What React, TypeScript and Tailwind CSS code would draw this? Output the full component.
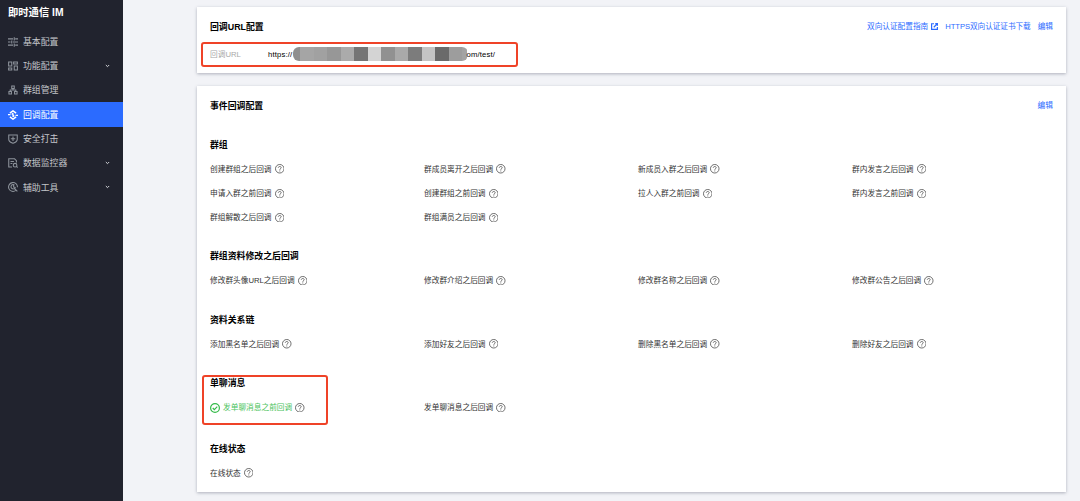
import React from "react";

type IconName = "sliders" | "grid" | "tree" | "callback" | "shield" | "monitor" | "tool";

const NavIcon = ({ name }: { name: IconName }) => {
  const shapes: Record<IconName, React.ReactNode> = {
    sliders: (
      <path d="M0 3h8M11.500 3H16M10 .5v5M0 8h4M8 8h8M6 5.500v5M0 13h8M11.500 13H16M10 10.500v5" />
    ),
    grid: (
      <path d="M1 1.500h5v6.500H1zM10 8h5v6.500h-5zM9 1.500h6v3.200H9zM1 11.300h5v3.200H1z" />
    ),
    tree: (
      <path d="M6 1.500h4v4H6zM1.500 10.500h4v4h-4zM10.500 10.500h4v4h-4zM8 5.500v2.600M3.500 10.500V8.100h9v2.400" />
    ),
    callback: (
      <>
        <path strokeWidth="2.300" d="M3 5 8 1.300 13 5M13 11l-5 3.700L3 11" />
        <path strokeWidth="2" d="M0 7.500h4M12 8.500h4M8 5v6M5.800 7 8 5M10.200 9 8 11" />
      </>
    ),
    shield: (
      <path d="M1.200 1.500h13.600v6.800c0 3-2.800 5.200-6.800 6.500-4-1.300-6.800-3.500-6.800-6.500zM8 4v7M4.500 7.500h7" />
    ),
    monitor: (
      <>
        <path d="M6.500 14.500H1.200V1.300h9.300l3 3V7M4 5.500h5.500M4 8.700h3" />
        <circle cx="11.300" cy="11.500" r="2.900" />
        <path d="m13.300 13.500 2.200 1.700" />
      </>
    ),
    tool: (
      <>
        <path d="M12.500 13.500A7.100 7.100 0 1 1 15.100 8.500" />
        <path d="M9.500 4.500a3.400 3.400 0 1 0 2 4L9 8V5.500zM10 10l5 5" />
      </>
    ),
  };
  return (
    <svg viewBox="0 0 16 16" className="size-[10px] shrink-0" fill="none" stroke="currentColor" strokeWidth="1.700">
      {shapes[name]}
    </svg>
  );
};

const NAV: { icon: IconName; label: string; more?: boolean; active?: boolean }[] = [
  { icon: "sliders", label: "基本配置" },
  { icon: "grid", label: "功能配置", more: true },
  { icon: "tree", label: "群组管理" },
  { icon: "callback", label: "回调配置", active: true },
  { icon: "shield", label: "安全打击" },
  { icon: "monitor", label: "数据监控器", more: true },
  { icon: "tool", label: "辅助工具", more: true },
];

const Help = () => (
  <svg viewBox="0 0 18 18" className="size-[9.500px] shrink-0 text-[#555]" fill="none" stroke="currentColor" strokeWidth="1.600">
    <circle cx="9" cy="9" r="8.100" />
    <path d="M6.300 7.200C6.300 3.900 11.700 3.900 11.700 7.100 11.700 8.900 9 8.800 9 11M9 12.300v1.800" />
  </svg>
);

const Check = () => (
  <svg viewBox="0 0 20 20" className="mr-[3px] size-[10px] shrink-0" fill="none" stroke="#35bb4a" strokeWidth="2.400">
    <circle cx="10" cy="10" r="8.800" />
    <path d="m5.500 10 3.200 3.200 5.800-5.800" />
  </svg>
);

const GROUPS: { title: string; items: string[]; className: string }[] = [
  {
    title: "群组",
    className: "h-[111.500px]",
    items: [
      "创建群组之后回调", "群成员离开之后回调", "新成员入群之后回调", "群内发言之后回调",
      "申请入群之前回调", "创建群组之前回调", "拉人入群之前回调", "群内发言之前回调",
      "群组解散之后回调", "群组满员之后回调",
    ],
  },
  {
    title: "群组资料修改之后回调",
    className: "h-[63.500px]",
    items: ["修改群头像URL之后回调", "修改群介绍之后回调", "修改群名称之后回调", "修改群公告之后回调"],
  },
  {
    title: "资料关系链",
    className: "h-[63.500px]",
    items: ["添加黑名单之后回调", "添加好友之后回调", "删除黑名单之后回调", "删除好友之后回调"],
  },
  { title: "单聊消息", className: "h-[65.500px]", items: ["发单聊消息之前回调", "发单聊消息之后回调"] },
  { title: "在线状态", className: "h-[50px]", items: ["在线状态"] },
];

const ENABLED = "发单聊消息之前回调";

const MOSAIC = [
  "w-[7px] bg-[#8f8f8f]", "w-[13.500px] bg-[#a5a5a5]", "w-[13.500px] bg-[#a1a1a1]", "w-[13.500px] bg-[#979797]",
  "w-[13.500px] bg-[#ababab]", "w-[13.500px] bg-[#757575]", "w-[13.500px] bg-[#d4d4d4]", "w-[13.500px] bg-[#919191]",
  "w-[13.500px] bg-[#a9a9a9]", "w-[13.500px] bg-[#7c7c7c]", "w-[13.500px] bg-[#c4c4c4]", "w-[13.500px] bg-[#6a6a6a]",
  "w-[13.500px] bg-[#9d9d9d]", "w-[5px] bg-[#a3a3a3]",
];

export default function App() {
  return (
    <div className="flex h-[501px] w-[1080px] overflow-hidden bg-[#f2f3f7] font-['Liberation_Sans','Noto_Sans_CJK_SC',sans-serif] text-black">
      <aside className="w-[123px] shrink-0 bg-[#21232e]">
        <h1 className="flex h-[29.500px] items-start pt-[5px] pl-[8px] text-[10.300px] leading-[15px] font-bold whitespace-nowrap text-white">
          即时通信 IM
        </h1>
        <nav>
          {NAV.map((n) => (
            <a
              key={n.label}
              className={`flex h-[24.300px] items-center pr-[13px] pl-[8px] text-[8.900px] ${n.active ? "bg-[#2b6bff] text-white" : "text-[#c3c5ca]"}`}
            >
              <span className={n.active ? "text-white" : "text-[#8d939b]"}>
                <NavIcon name={n.icon} />
              </span>
              <span className="ml-[5px] flex-1 pt-[1.500px] whitespace-nowrap">{n.label}</span>
              {n.more && (
                <svg viewBox="0 0 6 4" className="h-[4px] w-[5px]" fill="none" stroke="#d3d5da" strokeWidth="1.200">
                  <path d="m1 .8 2 2 2-2" />
                </svg>
              )}
            </a>
          ))}
        </nav>
      </aside>

      <main className="flex min-w-0 flex-1 flex-col gap-[13px] pt-[7px] pr-[14px] pl-[74px]">
        <section className="relative h-[66px] shrink-0 bg-white px-[13px] shadow-[0_1px_3px_rgba(50,54,80,0.35)]">
          <header className="flex h-[40px] items-center justify-between">
            <h2 className="pt-[1px] text-[8.900px] font-bold">回调URL配置</h2>
            <div className="flex items-center text-[7.650px] whitespace-nowrap text-[#2b6bff]">
              <span>双向认证配置指南</span>
              <svg viewBox="0 0 14 14" className="mr-[7px] ml-[3px] size-[7px]" fill="none" stroke="currentColor" strokeWidth="2.400">
                <path d="M6 1.500H1.200v11.300h11.600V8M8.500 1.200h4.300v4.500M12.500 1.500 5.500 8.500" />
              </svg>
              <span className="tracking-[-0.05px]">HTTPS双向认证证书下载</span>
              <span className="ml-[7px]">编辑</span>
            </div>
          </header>
          <div className="flex h-[14px] items-center text-[7.700px]">
            <span className="w-[58px] pt-[1px] text-[#a9a9a9]">回调URL</span>
            <span className="w-[25px] pt-[1px] tracking-[0.15px]">https://</span>
            <span className="flex h-[14px] w-[174.500px] overflow-hidden rounded-[6px]">
              {MOSAIC.map((c, i) => (
                <i key={i} className={`h-full shrink-0 ${c}`} />
              ))}
            </span>
            <span className="-ml-px pt-[1px] tracking-[0.15px]">om/test/</span>
          </div>
          <div className="absolute top-[35px] left-[4px] h-[25px] w-[317px] rounded-[3px] border-2 border-[#ef4328]" />
        </section>

        <section className="relative h-[406px] shrink-0 bg-white px-[13px] shadow-[0_1px_3px_rgba(50,54,80,0.35)]">
          <header className="flex h-[39px] items-center justify-between">
            <h2 className="pt-[2px] text-[8.900px] font-bold">事件回调配置</h2>
            <span className="text-[7.700px] text-[#2b6bff]">编辑</span>
          </header>
          <div className="pt-[12px]">
            {GROUPS.map((g) => (
              <div key={g.title} className={g.className}>
                <h3 className="flex h-[15px] items-center pt-[2px] text-[8.900px] font-bold">{g.title}</h3>
                <div className="grid grid-cols-[repeat(4,214px)] pt-[5px]">
                  {g.items.map((t) => (
                    <div key={t} className="flex h-[24.300px] items-center text-[7.700px] whitespace-nowrap text-[#333]">
                      {t === ENABLED && <Check />}
                      <span className={t === ENABLED ? "pt-[1px] text-[#4cc35e]" : "pt-[1px]"}>{t}</span>
                      <span className="ml-[3px]">
                        <Help />
                      </span>
                    </div>
                  ))}
                </div>
              </div>
            ))}
          </div>
          <div className="absolute top-[289px] left-[5px] h-[50px] w-[126px] rounded-[3px] border-2 border-[#ef4328]" />
        </section>
      </main>
    </div>
  );
}
